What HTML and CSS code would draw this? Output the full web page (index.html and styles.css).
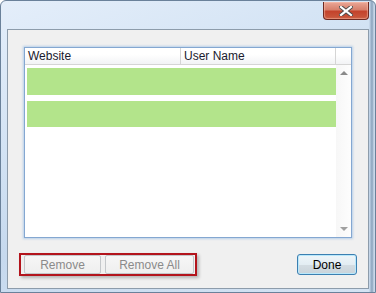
FILE: index.html
```html
<!DOCTYPE html>
<html lang="en">
<head>
    <meta charset="UTF-8">
    <meta name="viewport" content="width=device-width, initial-scale=1.0">
    <title>Saved Passwords</title>
    <link rel="stylesheet" href="styles.css">
</head>
<body>
    <div class="window">
        <div class="titlebar">
            <button type="button" class="close-btn" title="Close">
                <svg width="14" height="10" viewBox="0 0 14 10">
                    <path d="M2 1 L12 9 M12 1 L2 9" stroke="#4a4a4a" stroke-width="4" stroke-linecap="square"/>
                    <path d="M2 1 L12 9 M12 1 L2 9" stroke="#ffffff" stroke-width="2.2" stroke-linecap="square"/>
                </svg>
            </button>
        </div>
        <div class="panel">
            <div class="list">
                <div class="list-head">
                    <span class="col col-site">Website</span>
                    <span class="col col-user">User Name</span>
                    <span class="col col-end"></span>
                </div>
                <div class="list-body">
                    <div class="rows">
                        <div class="row"></div>
                        <div class="row row-wide"></div>
                    </div>
                    <div class="scroll">
                        <span class="arrow arrow-up"></span>
                        <span class="arrow arrow-down"></span>
                    </div>
                </div>
            </div>
            <div class="footer">
                <div class="remove-group">
                    <button type="button" class="btn btn-remove" disabled>Remove</button>
                    <button type="button" class="btn btn-remove-all" disabled>Remove All</button>
                </div>
                <button type="button" class="btn done-btn">Done</button>
            </div>
        </div>
    </div>
</body>
</html>
```

FILE: styles.css
```css
body {
    margin: 0;
    padding: 0;
    font-family: "Liberation Sans", Arial, sans-serif;
    font-size: 12px;
    background: #ffffff;
}
.window {
    width: 376px;
    height: 293px;
    box-sizing: border-box;
    border: 1px solid #6a819a;
    border-radius: 6px 6px 0 0;
    background:
        linear-gradient(to right, transparent 368px, #b8cbe0 369px, #8aa2bc 371px, #c9d8e9 373px),
        linear-gradient(160deg, #e4eefa 0%, #d3e3f4 35%, #c6d9ee 60%, #d4e3f3 100%);
}
.titlebar {
    height: 28px;
    display: flex;
    justify-content: flex-end;
    align-items: flex-start;
}
.close-btn {
    width: 46px;
    height: 18px;
    margin: 1px 6px 0 0;
    padding: 0;
    border: 1px solid #6e2a22;
    border-top: none;
    border-radius: 0 0 4px 4px;
    background: linear-gradient(to bottom, #e9a797 0%, #d7806c 45%, #c4432c 55%, #c95a3e 100%);
    box-shadow: inset 0 0 1px 1px rgba(255, 200, 180, 0.5);
    display: flex;
    align-items: center;
    justify-content: center;
    cursor: pointer;
}
.panel {
    height: 260px;
    margin: 0 6px;
    box-sizing: border-box;
    border: 1px solid #8d9cab;
    background-color: #f0f0f0;
    padding: 17px 16px 0 16px;
}
.list {
    width: 328px;
    height: 191px;
    box-sizing: border-box;
    border: 1px solid #84a7d1;
    box-shadow: 0 0 2px 1px rgba(120, 170, 225, 0.45);
    background-color: #ffffff;
    display: flex;
    flex-direction: column;
}
.list-head {
    display: flex;
    height: 16px;
    border-bottom: 1px solid #d5d5d5;
    background: linear-gradient(to bottom, #ffffff 0%, #ffffff 40%, #f2f3f5 100%);
    color: #1a1a2e;
}
.col {
    box-sizing: border-box;
    border-right: 1px solid #d5d5d5;
    padding-left: 3px;
    line-height: 16px;
}
.col-site {
    width: 156px;
}
.col-user {
    width: 155px;
}
.col-end {
    flex: 1;
    border-right: none;
}
.list-body {
    flex: 1;
    display: flex;
}
.rows {
    width: 311px;
    padding: 3px 0 0 2px;
    box-sizing: border-box;
}
.row {
    height: 27px;
    margin-bottom: 6px;
    background-color: #b3e48b;
}
.row-wide {
    height: 26px;
    margin-right: -2px;
}
.scroll {
    flex: 1;
    display: flex;
    flex-direction: column;
    justify-content: space-between;
    align-items: center;
    padding: 6px 0 6px 1px;
    background: linear-gradient(to right, #f7f7f7, #fdfdfd);
}
.arrow {
    width: 0;
    height: 0;
    border-left: 4px solid transparent;
    border-right: 4px solid transparent;
}
.arrow-up {
    border-bottom: 4px solid #8a8a8a;
}
.arrow-down {
    border-top: 4px solid #a0a0a0;
}
.footer {
    display: flex;
    justify-content: space-between;
    align-items: center;
    margin: 15px -5px 0 -5px;
}
.remove-group {
    display: flex;
    gap: 4px;
    height: 23px;
    box-sizing: border-box;
    border: 2px solid #b3141c;
    padding: 0 1px 0 3px;
    align-items: center;
    box-shadow: 2px 2px 3px rgba(0, 0, 0, 0.25);
}
.btn {
    font-family: "Liberation Sans", Arial, sans-serif;
    font-size: 12px;
    height: 19px;
    padding: 0;
    box-sizing: border-box;
    cursor: pointer;
}
.btn:disabled {
    color: #8a8a8a;
    border: 1px solid #c4c7ca;
    border-radius: 2px;
    background: linear-gradient(to bottom, #f6f6f6, #efefef);
    cursor: default;
}
.btn-remove {
    width: 77px;
    border-left-color: #e6e6e6;
    border-top-color: #e6e6e6;
}
.btn-remove-all {
    width: 89px;
    border-right-color: #e6e6e6;
    border-top-color: #e6e6e6;
}
.done-btn {
    width: 60px;
    height: 21px;
    color: #000000;
    border: 1px solid #3c7fb1;
    border-radius: 3px;
    background: linear-gradient(to bottom, #eef5f9 0%, #e3edf3 50%, #d4dde3 51%, #c9d3da 100%);
    box-shadow: inset 0 0 0 1px #b9e8fb;
}
```
